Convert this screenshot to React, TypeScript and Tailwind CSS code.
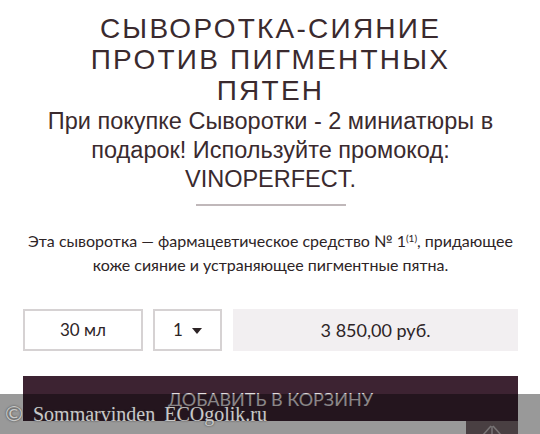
import React from "react";

function ArrowUp() {
  return (
    <svg width="52" height="20" viewBox="0 0 52 20" fill="none">
      <path d="M17 14 L25 5" stroke="#c9c2c4" strokeWidth="1.5" />
      <path d="M27 5 L35 14" stroke="#c9c2c4" strokeWidth="1.5" />
      <path d="M26 5 L26 20" stroke="#c9c2c4" strokeWidth="1.5" />
    </svg>
  );
}

export default function App() {
  return (
    <div className="relative h-[434px] w-[540px] overflow-hidden bg-white">
      <div className="px-[23px] pr-[22px] pt-[13px] text-center">
        {/* Title */}
        <h1 className="font-['Liberation_Sans',Arial,sans-serif] text-[28px] leading-[31px] tracking-[0.08em] text-[#3a2a2e]">
          СЫВОРОТКА-СИЯНИЕ
          <br />
          ПРОТИВ ПИГМЕНТНЫХ
          <br />
          ПЯТЕН
        </h1>

        {/* Promo */}
        <p className="mt-[1px] font-['Liberation_Sans',Arial,sans-serif] text-[23.5px] leading-[29px] text-[#3a2a2e]">
          При покупке Сыворотки - 2 миниатюры в
          <br />
          подарок! Используйте промокод:
          <br />
          VINOPERFECT.
        </p>

        <div className="mx-auto mt-[10px] h-[2px] w-[150px] bg-[#c0b8ba]" />

        {/* Description */}
        <p className="mt-[23px] font-['Lato','Noto_Sans',sans-serif] text-[16px] leading-[24px] text-[#2d2426]">
          Эта сыворотка — фармацевтическое средство № 1
          <sup className="text-[10px]">(1)</sup>, придающее
          <br />
          коже сияние и устраняющее пигментные пятна.
        </p>

        {/* Options row */}
        <div className="mt-[32px] flex h-[42px] items-stretch font-['Lato','Noto_Sans',sans-serif] text-[17px] text-[#2d2426]">
          <div className="flex w-[120px] items-center justify-center border-2 border-[#d6d2d3]">
            30 мл
          </div>
          <div className="ml-[10px] flex w-[69px] items-center justify-center gap-[9px] border-2 border-[#d6d2d3]">
            <span>1</span>
            <span className="mt-[2px] h-0 w-0 border-x-[5px] border-t-[6px] border-x-transparent border-t-[#2d2426]" />
          </div>
          <div className="ml-[11px] flex flex-1 items-center justify-center bg-[#f2eff1] text-[18px]">
            3 850,00 руб.
          </div>
        </div>

        {/* Add to cart */}
        <button className="mt-[25px] flex h-[45px] w-full items-start justify-center bg-[#3d2332] pt-[10px] font-['Lato','Noto_Sans',sans-serif] text-[18px] text-[#e6e0e3]">
          ДОБАВИТЬ В КОРЗИНУ
        </button>

        <div className="flex justify-end">
          <div className="flex h-[20px] w-[52px] items-start justify-center bg-[#7b6a6f]">
            <ArrowUp />
          </div>
        </div>
      </div>

      {/* Watermark band */}
      <div className="absolute bottom-0 left-0 flex h-[40px] w-full items-center bg-black/40 pl-[3px] font-['Liberation_Serif',serif] text-[20px] text-[#c8c8c8] [text-shadow:0_0_2px_#333]">
        <span className="font-['DejaVu_Sans',sans-serif] text-[22px] leading-none">©</span>
        <span className="ml-[8px]">Sommarvinden</span>
        <span className="ml-[9px]">ECOgolik.ru</span>
      </div>
    </div>
  );
}
